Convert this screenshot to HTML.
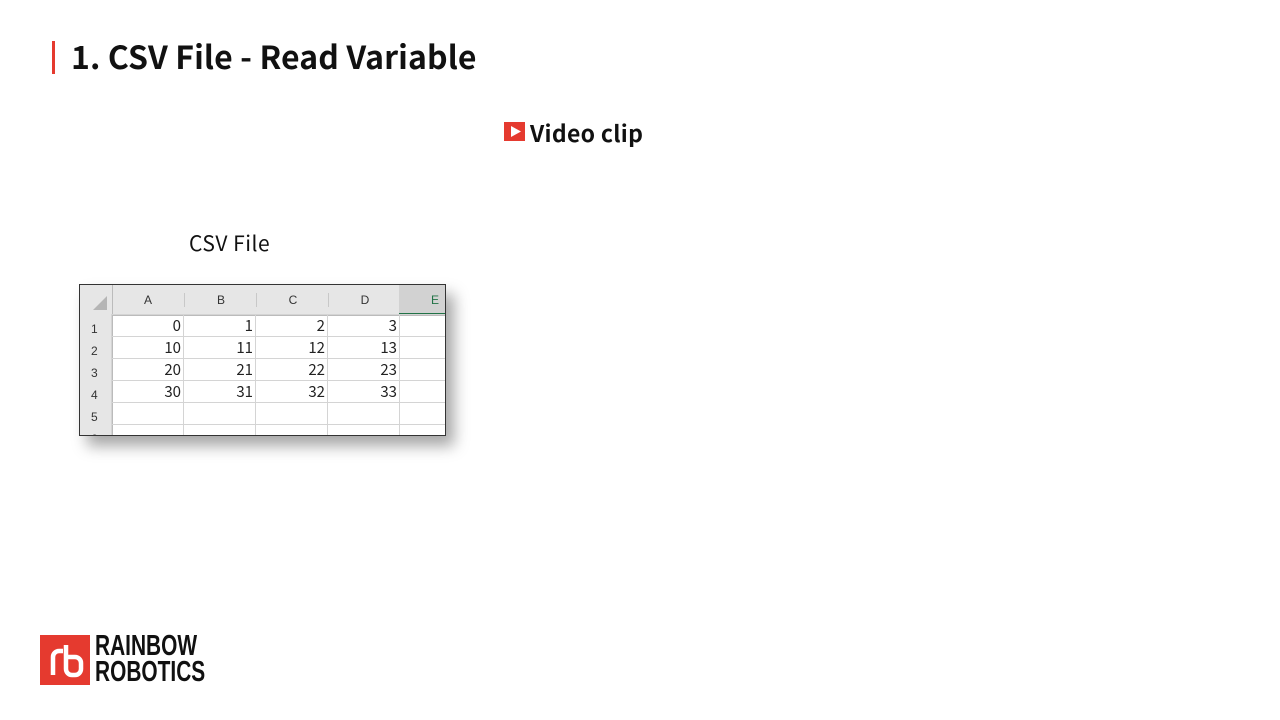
<!DOCTYPE html>
<html><head><meta charset="utf-8"><style>
body{margin:0;width:1280px;height:720px;background:#fff;position:relative;overflow:hidden;font-family:"Liberation Sans","Noto Sans CJK KR",sans-serif}
.abs{position:absolute}
table{border-collapse:collapse;font-size:15px;color:#222;table-layout:fixed;width:340px}
td{border:1px solid #d4d4d4;height:22px;padding:0 2px;text-align:right;box-sizing:border-box;font-family:"Noto Sans CJK KR",sans-serif;line-height:20px}
</style></head><body>
<div class="abs" style="left:52px;top:41px;width:3px;height:33px;background:#e53a2f"></div>
<div class="abs" style="left:71px;top:33px;font-size:32px;font-weight:bold;color:#111;font-family:'Noto Sans CJK KR','Liberation Sans',sans-serif;letter-spacing:0.1px">1. CSV File - Read Variable</div>
<div class="abs" style="left:504px;top:122px;width:21px;height:19px;background:#e53a2f"></div>
<svg class="abs" style="left:504px;top:122px" width="21" height="19"><polygon points="7,4 17,9.5 7,15" fill="#fff"/></svg>
<div class="abs" style="left:530px;top:115px;font-size:23px;font-weight:bold;color:#111;font-family:'Noto Sans CJK KR','Liberation Sans',sans-serif;letter-spacing:0.3px">Video clip</div>
<div class="abs" style="left:189px;top:228px;font-size:21px;color:#111;font-family:'Noto Sans CJK KR','Liberation Sans',sans-serif;letter-spacing:0.5px">CSV File</div>
<div class="abs" style="left:79px;top:284px;width:367px;height:152px;border:1px solid #333;box-sizing:border-box;overflow:hidden;box-shadow:8px 10px 14px rgba(0,0,0,0.35);background:#fff">
<div class="abs" style="left:0;top:0;width:367px;height:30px;background:#e6e6e6;border-bottom:1px solid #bbb"></div>
<div class="abs" style="left:0;top:0;width:32px;height:152px;background:#e6e6e6;border-right:1px solid #bbb"></div>
<svg class="abs" style="left:12px;top:10px" width="16" height="16"><polygon points="15,1 15,15 1,15" fill="#b5b5b5"/></svg>
<div class="abs" style="left:319px;top:0;width:48px;height:28px;background:#d2d2d2;border-bottom:2px solid #217346"></div>
<div class="abs" style="top:8px;left:32px;width:72px;text-align:center;font-size:12px;color:#333">A</div>
<div class="abs" style="top:8px;left:104px;width:72px;text-align:center;font-size:12px;color:#333;border-left:1px solid #c8c8c8">B</div>
<div class="abs" style="top:8px;left:176px;width:72px;text-align:center;font-size:12px;color:#333;border-left:1px solid #c8c8c8">C</div>
<div class="abs" style="top:8px;left:248px;width:72px;text-align:center;font-size:12px;color:#333;border-left:1px solid #c8c8c8">D</div>
<div class="abs" style="top:8px;left:351px;font-size:12px;color:#217346">E</div>
<div class="abs" style="left:11px;top:33px;font-size:12px;line-height:22px;color:#333">1<br>2<br>3<br>4<br>5<br>6</div>
<table class="abs" style="left:31px;top:29px">
<colgroup><col style="width:72px"><col style="width:72px"><col style="width:72px"><col style="width:72px"><col style="width:52px"></colgroup>
<tr><td>0</td><td>1</td><td>2</td><td>3</td><td></td></tr>
<tr><td>10</td><td>11</td><td>12</td><td>13</td><td></td></tr>
<tr><td>20</td><td>21</td><td>22</td><td>23</td><td></td></tr>
<tr><td>30</td><td>31</td><td>32</td><td>33</td><td></td></tr>
<tr><td></td><td></td><td></td><td></td><td></td></tr>
<tr><td></td><td></td><td></td><td></td><td></td></tr>
</table>
</div>
<div class="abs" style="left:40px;top:635px;width:50px;height:50px;background:#e53a2f"></div>
<svg class="abs" style="left:40px;top:635px" width="50" height="50"><path d="M13 40V22a6 6 0 0 1 6-6h4M26 10v24a6 6 0 0 0 6 6h3a6 6 0 0 0 6-6v-6a6 6 0 0 0-6-6h-9" fill="none" stroke="#fff" stroke-width="4.5"/></svg>
<div class="abs" style="left:95px;top:633px;font-size:29px;line-height:26px;font-weight:bold;color:#111;transform:scaleX(0.72);transform-origin:0 0">RAINBOW<br>ROBOTICS</div>
</body></html>
